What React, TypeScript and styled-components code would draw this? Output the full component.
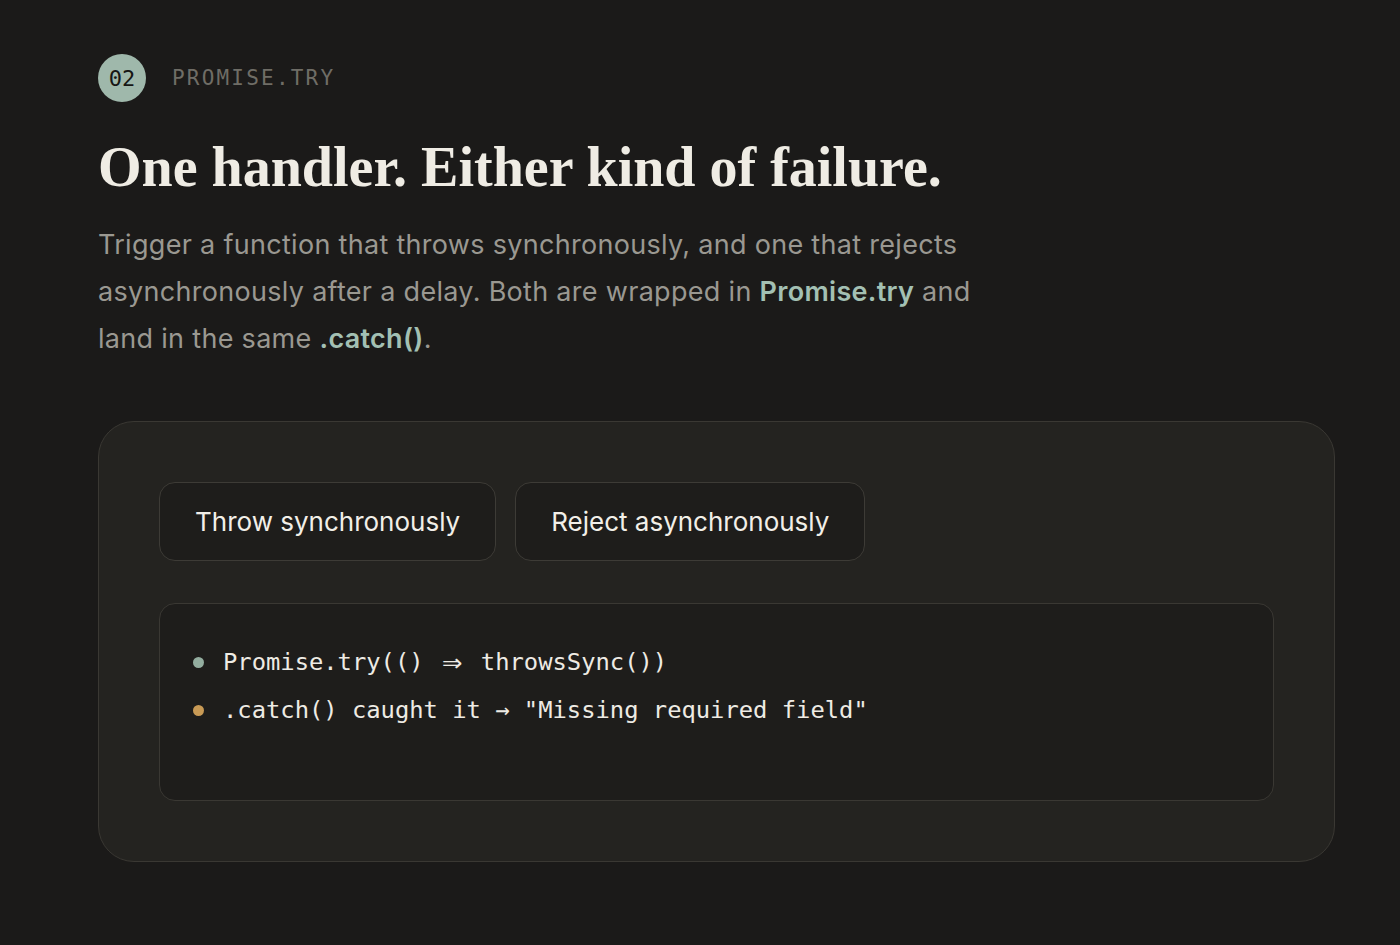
import React from 'react';
import styled, { createGlobalStyle } from 'styled-components';

const GlobalStyle = createGlobalStyle`
  html, body {
    margin: 0;
    padding: 0;
    background: #1b1a19;
  }
  body {
    font-family: Inter, 'Noto Sans', sans-serif;
    -webkit-font-smoothing: antialiased;
  }
`;

const Page = styled.main`
  min-height: 945px;
  box-sizing: border-box;
  padding: 54px 65px 0 98px;
`;

const Eyebrow = styled.div`
  display: flex;
  align-items: center;
  gap: 26px;
`;

const Badge = styled.span`
  width: 48px;
  height: 48px;
  border-radius: 50%;
  background: #9fb8ab;
  color: #161614;
  display: flex;
  align-items: center;
  justify-content: center;
  font-family: 'DejaVu Sans Mono', 'Liberation Mono', monospace;
  font-size: 22px;
`;

const Label = styled.span`
  font-family: 'DejaVu Sans Mono', 'Liberation Mono', monospace;
  font-size: 21px;
  letter-spacing: 2.2px;
  color: #6f6d66;
`;

const Title = styled.h1`
  margin: 33px 0 0;
  font-family: 'Liberation Serif', 'DejaVu Serif', serif;
  font-weight: 700;
  font-size: 56px;
  line-height: 64px;
  color: #efece4;
`;

const Lead = styled.p`
  margin: 22px 0 0;
  max-width: 900px;
  font-size: 27px;
  line-height: 47px;
  letter-spacing: 0.3px;
  color: #9a9891;
`;

const Hl = styled.strong`
  color: #a3c0b3;
  font-weight: 600;
`;

const Card = styled.section`
  margin-top: 59px;
  border: 1.5px solid #3a3833;
  border-radius: 36px;
  background: #242320;
  padding: 60px;
  display: flex;
  flex-direction: column;
  gap: 42px;
`;

const Actions = styled.div`
  display: flex;
  gap: 19px;
`;

const Button = styled.button`
  height: 79px;
  padding: 0 35px;
  border: 1.5px solid #3d3b36;
  border-radius: 16px;
  background: #1e1d1b;
  color: #f2efe8;
  font-family: Inter, 'Noto Sans', sans-serif;
  font-size: 26px;
  cursor: pointer;
`;

const Log = styled.div`
  min-height: 198px;
  box-sizing: border-box;
  border: 1.5px solid #3a3833;
  border-radius: 16px;
  background: #1e1d1b;
  padding: 34px 33px;
`;

const Line = styled.div`
  display: flex;
  align-items: center;
  gap: 19px;
  height: 48px;
  font-family: 'DejaVu Sans Mono', 'Liberation Mono', monospace;
  font-size: 23.8px;
  color: #eeebe4;
  white-space: pre;
`;

const Dot = styled.span<{ $tone: 'ok' | 'warn' }>`
  width: 11px;
  height: 11px;
  border-radius: 50%;
  flex: none;
  background: ${(p) => (p.$tone === 'ok' ? '#93ad9f' : '#c89a55')};
`;

// ligature-like "=>" rendered as a wide double arrow spanning two cells
const Arrow = styled.span`
  display: inline-block;
  width: 2ch;
  text-align: center;
  transform: scale(1.4, 1.3);
`;

export default function App() {
  return (
    <>
      <GlobalStyle />
      <Page>
        <Eyebrow>
          <Badge>02</Badge>
          <Label>PROMISE.TRY</Label>
        </Eyebrow>
        <Title>One handler. Either kind of failure.</Title>
        <Lead>
          Trigger a function that throws synchronously, and one that rejects
          asynchronously after a delay. Both are wrapped in <Hl>Promise.try</Hl> and
          land in the same <Hl>.catch()</Hl>.
        </Lead>
        <Card>
          <Actions>
            <Button>Throw synchronously</Button>
            <Button>Reject asynchronously</Button>
          </Actions>
          <Log>
            <Line>
              <Dot $tone="ok" />
              <span>
                Promise.try(() <Arrow>⇒</Arrow> throwsSync())
              </span>
            </Line>
            <Line>
              <Dot $tone="warn" />
              <span>.catch() caught it → "Missing required field"</span>
            </Line>
          </Log>
        </Card>
      </Page>
    </>
  );
}
